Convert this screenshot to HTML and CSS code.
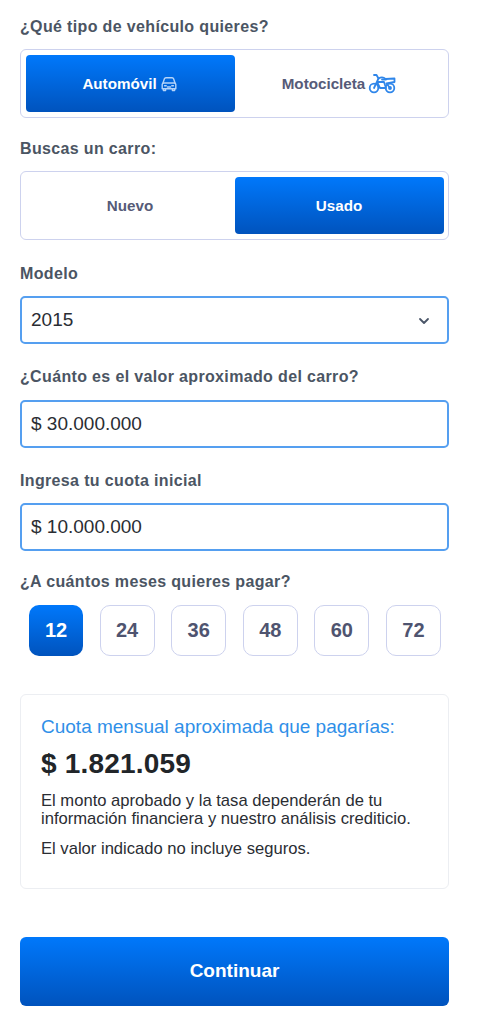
FILE: index.html
```html
<!DOCTYPE html>
<html lang="es">
<head>
<meta charset="utf-8">
<title>Simulador</title>
<link rel="stylesheet" href="styles.css">
</head>
<body>
<main class="form">
  <section class="field first">
    <p class="label">¿Qué tipo de vehículo quieres?</p>
    <div class="toggle">
      <div class="opt on">Automóvil
        <svg class="ico" width="18" height="18" viewBox="0 0 18 18" fill="none" stroke="#b4d4f9" stroke-width="1.400" stroke-linejoin="round" stroke-linecap="round"><path d="M3 8l1.400-4.200A1.600 1.600 0 0 1 5.900 2.700h6.200a1.600 1.600 0 0 1 1.500 1.100L15 8"/><path d="M2.200 9.300A1.500 1.500 0 0 1 3.700 8h10.600a1.500 1.500 0 0 1 1.500 1.300v4.400H2.200z"/><path d="M3.400 13.700v1.800h2.200v-1.800M12.400 13.700v1.800h2.200v-1.800M4.600 10.800h1.600M11.800 10.800h1.600M7.400 12h3.200"/></svg>
      </div>
      <div class="opt">Motocicleta
        <svg class="ico" width="28" height="21" viewBox="0 0 28 21" fill="none" stroke="#2f86ea" stroke-width="1.800" stroke-linecap="round" stroke-linejoin="round"><circle cx="6" cy="15" r="4.300"/><circle cx="22" cy="15" r="4.300"/><circle cx="22" cy="15" r="1"/><path d="M6 15L10.500 5.500 8.500 2H6M10 9h6l2 6h-6L9 9"/><path d="M10.500 5.500c2.500-1.500 5-1.500 7 .5l9-.5v3.500l-8 1.500L22 15"/><path d="M14 6.500h4"/></svg>
      </div>
    </div>
  </section>
  <section class="field second">
    <p class="label">Buscas un carro:</p>
    <div class="toggle">
      <div class="opt">Nuevo</div>
      <div class="opt on">Usado</div>
    </div>
  </section>
  <section class="field third">
    <p class="label">Modelo</p>
    <div class="input">2015
      <svg class="chev" width="12" height="8" viewBox="0 0 12 8" fill="none" stroke="#4a5568" stroke-width="1.800" stroke-linecap="round" stroke-linejoin="round"><path d="M2 2l4 4 4-4"/></svg>
    </div>
  </section>
  <section class="field fourth">
    <p class="label">¿Cuánto es el valor aproximado del carro?</p>
    <div class="input">$ 30.000.000</div>
  </section>
  <section class="field fifth">
    <p class="label">Ingresa tu cuota inicial</p>
    <div class="input">$ 10.000.000</div>
  </section>
  <section class="field sixth">
    <p class="label">¿A cuántos meses quieres pagar?</p>
    <div class="months">
      <div class="month on">12</div>
      <div class="month">24</div>
      <div class="month">36</div>
      <div class="month">48</div>
      <div class="month">60</div>
      <div class="month">72</div>
    </div>
  </section>
  <section class="card">
    <p class="card-title">Cuota mensual aproximada que pagarías:</p>
    <p class="price">$ 1.821.059</p>
    <p class="note">El monto aprobado y la tasa dependerán de tu información financiera y nuestro análisis crediticio.</p>
    <p class="note">El valor indicado no incluye seguros.</p>
  </section>
  <button class="cta" type="button">Continuar</button>
</main>
</body>
</html>
```
FILE: styles.css
```css
* { box-sizing: border-box; }
html, body { margin: 0; padding: 0; background: #fff; }
body { font-family: "Liberation Sans", Arial, sans-serif; color: #212529; }
p { margin: 0; }
.form { width: 429px; margin-left: 20px; padding-top: 17px; }
.first { margin-top: 0; }
.second { margin-top: 21px; }
.third { margin-top: 24px; }
.fourth { margin-top: 23px; }
.fifth { margin-top: 23px; }
.sixth { margin-top: 21px; }
.label { font-size: 16px; font-weight: 700; line-height: 20px; color: #4b5563; margin-bottom: 12px; letter-spacing: .35px; }
.fourth .label, .sixth .label { margin-bottom: 13px; }
.toggle { display: flex; height: 69px; padding: 5px 4.500px; border: 1.500px solid #cdd2ee; border-radius: 6px; background: #fff; }
.opt { flex: 1; display: flex; align-items: center; justify-content: center; gap: 3px; border-radius: 4px; font-size: 15.200px; font-weight: 700; color: #565b78; }
.opt.on { background: linear-gradient(180deg, #0078fb 0%, #0053bd 100%); color: #fff; }
.ico { flex: none; }
.input { position: relative; display: flex; align-items: center; height: 48px; padding-left: 9px; border: 2px solid #559ff0; border-radius: 5px; font-size: 19px; color: #2a2d33; }
.chev { position: absolute; right: 17px; top: 19px; }
.months { display: flex; justify-content: space-between; padding: 0 8px 0 9px; }
.month { width: 55px; height: 51px; display: flex; align-items: center; justify-content: center; border: 1.500px solid #cdd2ee; border-radius: 10px; font-size: 20px; font-weight: 700; color: #4f5470; }
.month.on { width: 54px; border: 0; background: linear-gradient(180deg, #0078fb 0%, #0053bd 100%); color: #fff; }
.card { height: 195px; margin-top: 38px; padding: 21px 20px 0; border: 1px solid #eceef2; border-radius: 6px; }
.card-title { font-size: 19px; line-height: 22px; color: #2f8fe8; }
.price { margin-top: 9px; font-size: 28px; line-height: 34px; font-weight: 700; letter-spacing: .2px; color: #212529; }
.note { margin-top: 11px; font-size: 16.600px; line-height: 18px; color: #2a2d33; }
.note + .note { margin-top: 12px; }
.cta { display: block; width: 100%; height: 69px; margin-top: 48px; padding-bottom: 2px; border: 0; border-radius: 6px; background: linear-gradient(180deg, #0078fb 0%, #0053bd 100%); color: #fff; font: 700 19px "Liberation Sans", Arial, sans-serif; }
```
